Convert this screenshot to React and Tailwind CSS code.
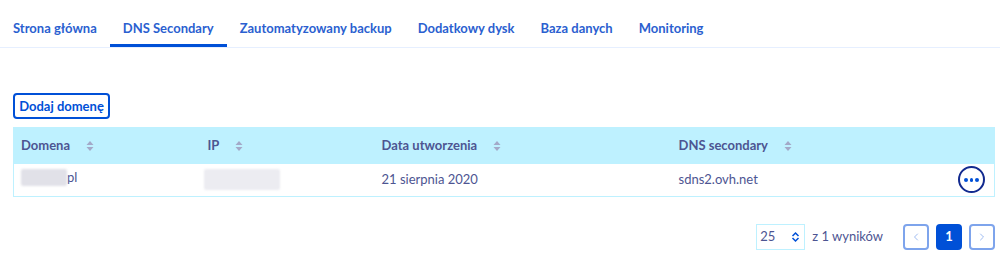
import { ChevronLeft, ChevronRight } from "lucide-react";

const tabs = [
  "Strona główna",
  "DNS Secondary",
  "Zautomatyzowany backup",
  "Dodatkowy dysk",
  "Baza danych",
  "Monitoring",
];

function SortIcon() {
  return (
    <svg width="8" height="12" viewBox="0 0 8 12" className="ml-[16px] shrink-0">
      <path d="M4 1 L7.5 5 H0.5 Z" fill="#a3a9c8" />
      <path d="M4 11 L7.5 7 H0.5 Z" fill="#a3a9c8" />
    </svg>
  );
}

function Th({ children, className = "" }) {
  return (
    <th className={`text-left font-bold text-[13px] text-[#4d5592] px-0 ${className}`}>
      <span className="inline-flex items-center">
        {children}
        <SortIcon />
      </span>
    </th>
  );
}

export default function App() {
  return (
    <div
      className="w-[1000px] h-[262px] bg-white overflow-hidden"
      style={{ fontFamily: "Lato, 'Noto Sans', sans-serif" }}
    >
      <nav className="flex border-b border-[#e6efff] h-[48px]">
        {tabs.map((t, i) => (
          <div
            key={t}
            className={`px-[13px] pt-[18px] h-[47px] text-[13px] font-bold text-[#2b5fd0] leading-[20px] border-b-[3px] ${
              i === 1 ? "border-[#0050d7]" : "border-transparent"
            }`}
          >
            {t}
          </div>
        ))}
      </nav>

      <div className="pl-[13px] pr-[5px]">
        <button
          type="button"
          className="mt-[45px] h-[26px] w-[97px] rounded-[4px] border-2 border-[#0050d7] text-[#0050d7] text-[13px] font-bold leading-none"
        >
          Dodaj domenę
        </button>

        <table className="mt-[8px] w-full table-fixed border border-[#bef1ff] border-collapse">
          <colgroup>
            <col className="w-[194px]" />
            <col className="w-[174px]" />
            <col className="w-[297px]" />
            <col />
            <col className="w-[50px]" />
          </colgroup>
          <thead>
            <tr className="bg-[#bef1ff] h-[36px]">
              <Th className="pl-[7px]">Domena</Th>
              <Th>IP</Th>
              <Th>Data utworzenia</Th>
              <Th>DNS secondary</Th>
              <th />
            </tr>
          </thead>
          <tbody>
            <tr className="h-[33px] text-[13px] text-[#4d5592]">
              <td className="pl-[7px]">
                <span className="inline-flex items-center">
                  <span className="inline-block w-[46px] h-[17px] bg-[#e1e1e8] rounded-[2px] blur-[1px]" />
                  <span className="leading-[17px]">pl</span>
                </span>
              </td>
              <td>
                <span className="inline-block -ml-[4px] w-[76px] h-[21px] bg-[#ececf1] rounded-[2px] blur-[1px] align-middle" />
              </td>
              <td>21 sierpnia 2020</td>
              <td>sdns2.ovh.net</td>
              <td className="pr-[9px] text-right">
                <button
                  type="button"
                  className="inline-flex items-center justify-center w-[27px] h-[27px] rounded-full border-2 border-[#122a8f] gap-[2px] align-middle"
                >
                  <span className="w-[3.5px] h-[3.5px] rounded-full bg-[#0050d7]" />
                  <span className="w-[3.5px] h-[3.5px] rounded-full bg-[#0050d7]" />
                  <span className="w-[3.5px] h-[3.5px] rounded-full bg-[#0050d7]" />
                </button>
              </td>
            </tr>
          </tbody>
        </table>

        <div className="mt-[27px] flex items-center justify-end">
          <div className="flex items-center justify-between w-[49px] h-[26px] border border-[#bef1ff] pl-[3px] pr-[4px] text-[13px] text-[#4d5592]">
            <span>25</span>
            <svg width="9" height="12" viewBox="0 0 9 12">
              <path d="M1.5 5 L4.5 2 L7.5 5" fill="none" stroke="#0050d7" strokeWidth="1.5" />
              <path d="M1.5 7 L4.5 10 L7.5 7" fill="none" stroke="#0050d7" strokeWidth="1.5" />
            </svg>
          </div>
          <span className="ml-[7px] text-[13px] text-[#4d5592]">z 1 wyników</span>
          <div className="ml-[20px] flex gap-[7px]">
            <div className="w-[26px] h-[26px] rounded-[4px] border-2 border-[#7ea4ec] flex items-center justify-center text-[#7ea4ec]">
              <ChevronLeft size={12} strokeWidth={1.5} />
            </div>
            <div className="w-[26px] h-[26px] rounded-[4px] bg-[#0050d7] flex items-center justify-center text-white text-[13px] font-bold">
              1
            </div>
            <div className="w-[26px] h-[26px] rounded-[4px] border-2 border-[#7ea4ec] flex items-center justify-center text-[#7ea4ec]">
              <ChevronRight size={12} strokeWidth={1.5} />
            </div>
          </div>
        </div>
      </div>
    </div>
  );
}
